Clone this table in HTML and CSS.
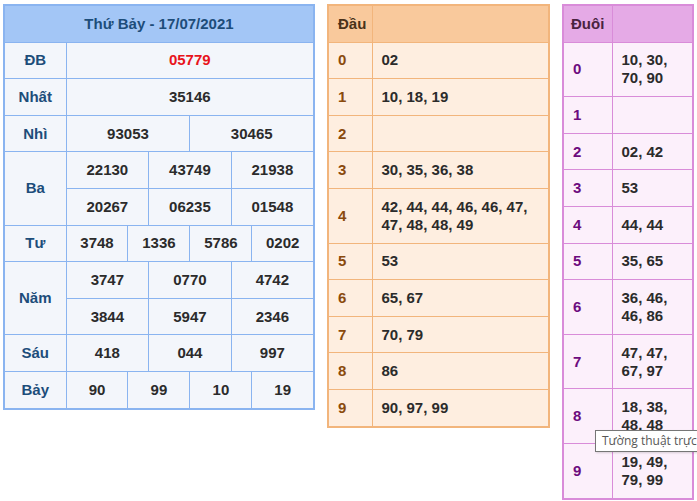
FILE: index.html
```html
<!DOCTYPE html>
<html lang="vi">
<head>
<meta charset="utf-8">
<title>KQXS</title>
<link rel="stylesheet" href="styles.css">
</head>
<body>
<div class="page">
  <table class="kq">
    <colgroup><col class="c-lbl"><col span="12" class="c-sub"></colgroup>
    <tr><th colspan="13" class="title">Thứ Bảy - 17/07/2021</th></tr>
    <tr><td class="lbl">ĐB</td><td colspan="12" class="db">05779</td></tr>
    <tr><td class="lbl">Nhất</td><td colspan="12">35146</td></tr>
    <tr><td class="lbl">Nhì</td><td colspan="6">93053</td><td colspan="6">30465</td></tr>
    <tr><td class="lbl" rowspan="2">Ba</td><td colspan="4">22130</td><td colspan="4">43749</td><td colspan="4">21938</td></tr>
    <tr><td colspan="4">20267</td><td colspan="4">06235</td><td colspan="4">01548</td></tr>
    <tr><td class="lbl">Tư</td><td colspan="3">3748</td><td colspan="3">1336</td><td colspan="3">5786</td><td colspan="3">0202</td></tr>
    <tr><td class="lbl" rowspan="2">Năm</td><td colspan="4">3747</td><td colspan="4">0770</td><td colspan="4">4742</td></tr>
    <tr><td colspan="4">3844</td><td colspan="4">5947</td><td colspan="4">2346</td></tr>
    <tr><td class="lbl">Sáu</td><td colspan="4">418</td><td colspan="4">044</td><td colspan="4">997</td></tr>
    <tr><td class="lbl">Bảy</td><td colspan="3">90</td><td colspan="3">99</td><td colspan="3">10</td><td colspan="3">19</td></tr>
  </table>

  <table class="loto dau">
    <colgroup><col class="c-key"><col></colgroup>
    <tr><th>Đầu</th><th></th></tr>
    <tr><td class="key">0</td><td>02</td></tr>
    <tr><td class="key">1</td><td>10, 18, 19</td></tr>
    <tr><td class="key">2</td><td></td></tr>
    <tr><td class="key">3</td><td>30, 35, 36, 38</td></tr>
    <tr><td class="key">4</td><td>42, 44, 44, 46, 46, 47, 47, 48, 48, 49</td></tr>
    <tr><td class="key">5</td><td>53</td></tr>
    <tr><td class="key">6</td><td>65, 67</td></tr>
    <tr><td class="key">7</td><td>70, 79</td></tr>
    <tr><td class="key">8</td><td>86</td></tr>
    <tr><td class="key">9</td><td>90, 97, 99</td></tr>
  </table>

  <table class="loto duoi">
    <colgroup><col class="c-key"><col></colgroup>
    <tr><th>Đuôi</th><th></th></tr>
    <tr><td class="key">0</td><td>10, 30, 70, 90</td></tr>
    <tr><td class="key">1</td><td></td></tr>
    <tr><td class="key">2</td><td>02, 42</td></tr>
    <tr><td class="key">3</td><td>53</td></tr>
    <tr><td class="key">4</td><td>44, 44</td></tr>
    <tr><td class="key">5</td><td>35, 65</td></tr>
    <tr><td class="key">6</td><td>36, 46, 46, 86</td></tr>
    <tr><td class="key">7</td><td>47, 47, 67, 97</td></tr>
    <tr><td class="key">8</td><td>18, 38, 48, 48</td></tr>
    <tr><td class="key">9</td><td>19, 49, 79, 99</td></tr>
  </table>
</div>
<div class="tooltip">Tường thuật trực tiếp</div>
</body>
</html>
```
FILE: styles.css
```css
html, body {
  margin: 0;
  padding: 0;
  overflow: hidden;
  background: #ffffff;
}
body {
  font-family: "Liberation Sans", Arial, sans-serif;
  font-size: 15px;
  font-weight: bold;
  color: #2b2b2b;
  position: relative;
  width: 697px;
  height: 501px;
}
.page {
  display: flex;
  align-items: flex-start;
  gap: 12px;
  padding: 4px 0 0 3px;
}
table {
  border-collapse: collapse;
  table-layout: fixed;
}
td, th {
  padding: 8.8px 9px;
  line-height: 18px;
  font-weight: bold;
}

/* Results table */
.kq {
  width: 312px;
  border: 2px solid #8ab4f0;
  background: #f3f6fb;
}
.kq .c-lbl { width: 62px; }
.kq td, .kq th {
  border: 1px solid #8ab4f0;
  text-align: center;
  padding-left: 0;
  padding-right: 0;
}
.kq .title {
  background: #a3c6f6;
  color: #1d4d7a;
}
.kq .lbl { color: #1d4d7a; }
.kq .db { color: #e8141b; }

/* Loto tables */
.loto td, .loto th {
  text-align: left;
  vertical-align: middle;
}
.dau {
  width: 223px;
  border: 2px solid #f2b57c;
  background: #feeee0;
}
.dau .c-key { width: 44px; }
.dau td, .dau th { border: 1px solid #f2b57c; }
.dau th { background: #f9c99c; color: #4a3219; }
.dau .key { color: #8a4a0d; }

.duoi {
  width: 132px;
  border: 2px solid #d98cd9;
  background: #fcf0fb;
}
.duoi .c-key { width: 49px; }
.duoi td, .duoi th { border: 1px solid #d98cd9; }
.duoi th { background: #e5aae6; color: #4a2340; padding-left: 7px; }
.duoi .key { color: #6d0b7e; }

.tooltip {
  position: absolute;
  left: 595px;
  top: 430px;
  white-space: nowrap;
  background: #ffffff;
  border: 1px solid #767676;
  padding: 2px 5px 3px 6px;
  font-family: "Open Sans", "Noto Sans", sans-serif;
  font-weight: normal;
  font-size: 12px;
  line-height: 15px;
  color: #575757;
  box-shadow: 1px 1px 2px rgba(0,0,0,0.15);
}
```
